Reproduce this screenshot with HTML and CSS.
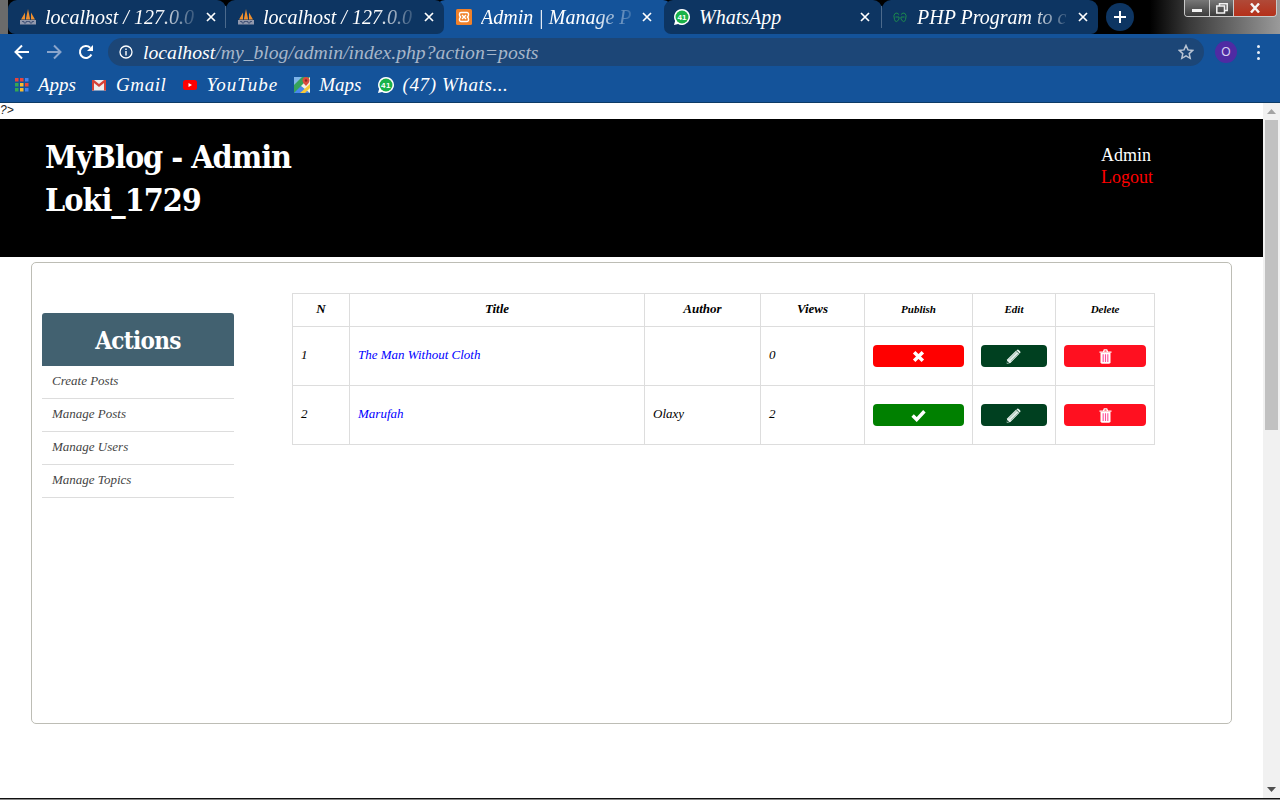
FILE: index.html
```html
<!DOCTYPE html>
<html lang="en">
<head>
<meta charset="utf-8">
<title>Admin | Manage Posts</title>
<link rel="stylesheet" href="styles.css">
</head>
<body>
<svg class="defs" width="0" height="0" aria-hidden="true">
  <defs>
    <symbol id="pma" viewBox="0 0 16 16">
      <path d="M1 10.500 5 3.500v7zM5.800 10.500 8 0l2.200 10.500zM11 3.500l4 7h-4z" fill="#ee8f2e"/>
      <path d="M0 11h16v4.500H0z" fill="#9299ad"/>
      <path d="M2 12.500h2v1.500h2v-1.500h4v1.500h2v-1.500h2" stroke="#33466e" stroke-width=".8" fill="none"/>
    </symbol>
    <symbol id="wa" viewBox="0 0 16 16">
      <path d="M8 0a8 8 0 1 1-3.900 15L0 16l1.100-4A8 8 0 0 1 8 0z" fill="#fff"/>
      <circle cx="8" cy="8" r="6.500" fill="#1ab248"/>
      <text x="8" y="11" class="wa-count">41</text>
    </symbol>
    <symbol id="x" viewBox="0 0 10 10">
      <path d="M1 1l8 8M9 1l-8 8" stroke="#fff" stroke-width="1.700" fill="none"/>
    </symbol>
    <symbol id="pencil" viewBox="0 0 16 16">
      <path d="M1.200 11.300 10.600 1.900l3.500 3.500-9.400 9.400-3.900.8z" fill="#e6f1ec"/>
      <path d="M11.600 1q1-1 2 0l1.400 1.400q1 1 0 2l-.5.500-3.500-3.500z" fill="#e6f1ec"/>
      <path d="M3.200 11.200 11.200 3.200M5 13 13 5" stroke="#7fa493" stroke-width=".8"/>
      <path d="M.8 15.200l.5-2.600 2.100 2.100z" fill="#23543d"/>
    </symbol>
    <symbol id="trash" viewBox="0 0 14 16">
      <path d="M.5 2.600h13V4H.5zM4.200 2.600l1-2.400h3.600l1 2.400H8.300l-.5-1.100H6.200l-.5 1.100z" fill="#fff"/>
      <path d="M1.600 4h10.800v10.200q0 1.600-1.600 1.600H3.200q-1.600 0-1.600-1.600z" fill="#fff"/>
      <path d="M4.500 5.500v8.500M7 5.500v8.500M9.500 5.500v8.500" stroke="#ff4f9a" stroke-width="1.200"/>
    </symbol>
  </defs>
</svg>

<div class="chrome">
  <div class="tabstrip">
    <div class="tab tab-first">
      <svg class="favicon"><use href="#pma"/></svg>
      <span class="tab-title">localhost / 127.0.0</span>
      <svg class="tab-close"><use href="#x"/></svg>
    </div>
    <div class="tab tab-before">
      <svg class="favicon"><use href="#pma"/></svg>
      <span class="tab-title">localhost / 127.0.0</span>
      <svg class="tab-close"><use href="#x"/></svg>
    </div>
    <div class="tab tab-active">
      <svg class="favicon" viewBox="0 0 16 16">
        <rect width="16" height="16" rx="1.500" fill="#f0812a"/>
        <path d="M5 3.500h6a1.500 1.500 0 0 1 1.500 1.500v1a2 2 0 0 1-1.500 2 2 2 0 0 1 1.500 2v1a1.500 1.500 0 0 1-1.500 1.500H5A1.500 1.500 0 0 1 3.500 11v-1A2 2 0 0 1 5 8 2 2 0 0 1 3.500 6V5A1.500 1.500 0 0 1 5 3.500zM6 6l4 4M10 6l-4 4" fill="none" stroke="#fff" stroke-width="1.400"/>
      </svg>
      <span class="tab-title">Admin | Manage P</span>
      <svg class="tab-close"><use href="#x"/></svg>
    </div>
    <div class="tab tab-after">
      <svg class="favicon"><use href="#wa"/></svg>
      <span class="tab-title tab-title-full">WhatsApp</span>
      <svg class="tab-close"><use href="#x"/></svg>
    </div>
    <div class="tab tab-last">
      <svg class="favicon" viewBox="0 0 16 16">
        <path d="M7 5.500Q5 3 3 4.500T2.500 10.500 7 10V8H3.500M9 5.500Q11 3 13 4.500T13.500 10.500 9 10V8h3.500" fill="none" stroke="#1c8a4e" stroke-width="1"/>
      </svg>
      <span class="tab-title">PHP Program to c</span>
      <svg class="tab-close"><use href="#x"/></svg>
    </div>
    <div class="newtab">
      <svg width="14" height="14" viewBox="0 0 14 14"><path d="M7 1v12M1 7h12" stroke="#fff" stroke-width="2"/></svg>
    </div>
    <div class="winctl">
      <span class="win-btn win-min"><i class="min-bar"></i></span>
      <span class="win-btn win-max"><svg width="12" height="11" viewBox="0 0 12 11"><path d="M3.500 2.500V.8h7.700v6.700H9M.8 3h7.700v7H.8z" fill="none" stroke="#f2f2f2" stroke-width="1.500"/></svg></span>
      <span class="win-btn win-close"><svg width="12" height="10" viewBox="0 0 12 10"><path d="M2 .5l8 9M10 .5l-8 9" stroke="#f5f5f5" stroke-width="2.400"/></svg></span>
    </div>
  </div>

  <div class="toolbar">
    <svg class="nav-icon" viewBox="0 0 16 16"><path d="M15 8H2M8 1.500 1.500 8 8 14.500" fill="none" stroke="#fff" stroke-width="2"/></svg>
    <svg class="nav-icon nav-fwd" viewBox="0 0 16 16"><path d="M1 8h13M8 1.500 14.500 8 8 14.500" fill="none" stroke="#8ba5cb" stroke-width="2"/></svg>
    <svg class="nav-icon nav-reload" viewBox="0 0 16 16"><path d="M13.400 10.500A6 6 0 1 1 12.200 3.700" fill="none" stroke="#fff" stroke-width="2"/><path d="M15 1v6H9z" fill="#fff"/></svg>
    <div class="omnibox">
      <svg class="info" viewBox="0 0 14 14"><circle cx="7" cy="7" r="6" fill="none" stroke="#fff" stroke-width="1.300"/><path d="M7 6v4.500M7 3.500v1.400" stroke="#fff" stroke-width="1.400"/></svg>
      <span class="url"><b class="host">localhost</b>/my_blog/admin/index.php?action=posts</span>
      <svg class="star" viewBox="0 0 16 16"><path d="M8 1.500l2 4.400 4.800.5-3.600 3.200 1 4.700L8 11.900l-4.200 2.400 1-4.700L1.200 6.400 6 5.900z" fill="none" stroke="#b9c4d3" stroke-width="1.500"/></svg>
    </div>
    <span class="avatar">O</span>
    <span class="menu-dots"><i></i><i></i><i></i></span>
  </div>

  <div class="bookmarks">
    <span class="bm bm-tight">
      <svg class="bm-icon bm-apps" viewBox="0 0 14 14">
        <path d="M0 0h3.500v3.500H0z" fill="#e8453c"/><path d="M5 0h3.500v3.500H5z" fill="#e8453c"/><path d="M10 0h3.500v3.500H10z" fill="#3e82f1"/>
        <path d="M0 5h3.500v3.500H0z" fill="#34a853"/><path d="M5 5h3.500v3.500H5z" fill="#f9bb2d"/><path d="M10 5h3.500v3.500H10z" fill="#e8453c"/>
        <path d="M0 10h3.500v3.500H0z" fill="#34a853"/><path d="M5 10h3.500v3.500H5z" fill="#f9bb2d"/><path d="M10 10h3.500v3.500H10z" fill="#3e82f1"/>
      </svg>Apps
    </span>
    <span class="bm">
      <svg class="bm-icon" viewBox="0 0 14 14"><rect y="2" width="14" height="10.500" fill="#eee"/><path d="M0 2h2l5 4 5-4h2v10.500h-2V5L7 9 2 5v7.500H0z" fill="#d64237"/></svg>Gmail
    </span>
    <span class="bm bm-wide">
      <svg class="bm-icon" viewBox="0 0 14 14"><rect y="2" width="14" height="10" rx="2.500" fill="#f00"/><path d="M5.500 5v4L9 7z" fill="#fff"/></svg>YouTube
    </span>
    <span class="bm bm-tight">
      <svg class="bm-icon bm-maps" viewBox="0 0 16 16"><rect width="16" height="16" fill="#36a35a"/><path d="M0 16 7 9l9 7z" fill="#4a87ee"/><path d="M0 0h8L0 8z" fill="#7fb4e8"/><path d="M7 9 16 0v16z" fill="#f4f1e6"/><path d="M6 16 16 7v4l-5 5z" fill="#f7c93a"/><path d="M12 0a3.500 3.500 0 0 1 3.500 3.500Q15.500 5.500 12 9 8.500 5.500 8.500 3.500A3.500 3.500 0 0 1 12 0z" fill="#dd4b3e"/><circle cx="12" cy="3.500" r="1.200" fill="#8f2a22"/></svg>Maps
    </span>
    <span class="bm">
      <svg class="bm-icon bm-wa"><use href="#wa"/></svg>(47) Whats...
    </span>
  </div>
</div>

<div class="viewport">
  <main class="page">
    <div class="leak">?&gt;</div>
    <header class="site-head">
      <h1 class="brand">MyBlog - Admin<br>Loki_1729</h1>
      <nav class="head-nav">
        <a class="nav-admin">Admin</a>
        <a class="nav-logout">Logout</a>
      </nav>
    </header>
    <section class="card">
      <aside class="side">
        <h2 class="side-title">Actions</h2>
        <a class="side-link">Create Posts</a>
        <a class="side-link">Manage Posts</a>
        <a class="side-link">Manage Users</a>
        <a class="side-link">Manage Topics</a>
      </aside>
      <table class="posts">
        <colgroup>
          <col class="c-n"><col class="c-title"><col class="c-author"><col class="c-views"><col class="c-pub"><col class="c-edit"><col class="c-del">
        </colgroup>
        <thead>
          <tr>
            <th>N</th><th>Title</th><th>Author</th><th>Views</th>
            <th class="th-small">Publish</th><th class="th-small">Edit</th><th class="th-small">Delete</th>
          </tr>
        </thead>
        <tbody>
          <tr>
            <td>1</td><td><a class="post-link">The Man Without Cloth</a></td><td></td><td>0</td>
            <td class="td-act"><span class="btn btn-red"><svg class="ic" viewBox="0 0 12 12"><path d="M2 2l8 8M10 2l-8 8" stroke="#fff" stroke-width="3.200"/></svg></span></td>
            <td class="td-act"><span class="btn btn-dark"><svg class="ic ic-pen"><use href="#pencil"/></svg></span></td>
            <td class="td-act"><span class="btn btn-del"><svg class="ic ic-trash"><use href="#trash"/></svg></span></td>
          </tr>
          <tr>
            <td>2</td><td><a class="post-link">Marufah</a></td><td>Olaxy</td><td>2</td>
            <td class="td-act"><span class="btn btn-green"><svg class="ic ic-check" viewBox="0 0 14 12"><path d="M1.500 6l3.800 3.800L12.500 2" fill="none" stroke="#fff" stroke-width="3.200"/></svg></span></td>
            <td class="td-act"><span class="btn btn-dark"><svg class="ic ic-pen"><use href="#pencil"/></svg></span></td>
            <td class="td-act"><span class="btn btn-del"><svg class="ic ic-trash"><use href="#trash"/></svg></span></td>
          </tr>
        </tbody>
      </table>
    </section>
  </main>
  <div class="scrollbar">
    <svg class="sb-arrow" width="9" height="5" viewBox="0 0 9 5"><path d="M4.500 0 9 5H0z" fill="#a3a3a3"/></svg>
    <div class="sb-thumb"></div>
    <svg class="sb-arrow sb-down" width="9" height="5" viewBox="0 0 9 5"><path d="M4.500 5 9 0H0z" fill="#505050"/></svg>
  </div>
</div>
<div class="taskline"></div>
</body>
</html>
```
FILE: styles.css
```css
* { box-sizing: border-box; }
html, body { height: 100%; }
body {
  margin: 0;
  width: 1280px;
  height: 800px;
  overflow: hidden;
  display: flex;
  flex-direction: column;
  background: #fff;
  font-family: "Liberation Serif", serif;
  color: #000;
}
.defs { display: block; height: 0; }
.wa-count {
  fill: #fff;
  font: 700 8px "Liberation Sans", sans-serif;
  text-anchor: middle;
}

/* browser chrome */
.chrome {
  height: 103px;
  flex: none;
  display: flex;
  flex-direction: column;
  font-family: "Liberation Serif", serif;
  font-style: italic;
  color: #fff;
  border-bottom: 1px solid #0c3a66;
}
.tabstrip {
  height: 34px;
  flex: none;
  display: flex;
  align-items: stretch;
  padding-left: 8px;
  background: linear-gradient(90deg, #6b6b6b 0, #6b6b6b 8px, #000 8px, #000 1150px, #3a3a3a 1190px, #9a9a9a 1280px);
}
.tab {
  width: 218px;
  flex: none;
  position: relative;
  z-index: 1;
  display: flex;
  align-items: center;
  padding: 0 10px 0 12px;
  background: #0d3562;
  border-radius: 9px 9px 0 0;
}
.tab-first { border-radius: 9px 9px 0 7px; }
.tab-first::after, .tab-after::after {
  content: "";
  position: absolute;
  right: 0;
  top: 6px;
  bottom: 6px;
  width: 1px;
  background: #4c6a8c;
}
.tab-before { border-radius: 9px 9px 7px 0; }
.tab-active {
  width: 236px;
  margin: 0 -8px;
  padding: 0 20px 0 20px;
  z-index: 0;
  background: #14539a;
}
.tab-after { padding: 0 12px 0 10px; border-radius: 9px 9px 0 7px; }
.tab-last { width: 216px; padding: 0 10px 0 10px; border-radius: 9px 9px 7px 0; }
.favicon { width: 16px; height: 16px; flex: none; margin-right: 9px; }
.tab-title {
  flex: 1;
  min-width: 0;
  white-space: nowrap;
  font-size: 20px;
  -webkit-mask-image: linear-gradient(90deg, #000 72%, transparent 100%);
  mask-image: linear-gradient(90deg, #000 72%, transparent 100%);
}
.tab-title-full { -webkit-mask-image: none; mask-image: none; }
.tab-close { width: 10px; height: 10px; flex: none; margin-left: 4px; }
.newtab {
  width: 28px;
  height: 28px;
  flex: none;
  margin: 3px 0 0 8px;
  border-radius: 50%;
  background: #0d3562;
  display: flex;
  align-items: center;
  justify-content: center;
}
.winctl {
  margin-left: auto;
  margin-right: 3px;
  height: 17px;
  display: flex;
  border: 1px solid #c9c9c9;
  border-top: 0;
  border-radius: 0 0 4px 4px;
  overflow: hidden;
}
.win-btn {
  display: flex;
  align-items: center;
  justify-content: center;
  height: 100%;
  border-right: 1px solid #ccc;
}
.win-min { width: 25px; background: linear-gradient(#777, #3c3c3c); }
.win-max { width: 24px; background: linear-gradient(#777, #3c3c3c); }
.win-close { width: 42px; background: linear-gradient(#b04a38, #b5301a); border-right: 0; }
.min-bar { display: block; width: 10px; height: 3px; margin-top: 5px; background: #f2f2f2; }

.toolbar {
  height: 33px;
  flex: none;
  display: flex;
  align-items: center;
  padding: 3px 0 0 14px;
  background: #14539a;
}
.nav-icon { width: 16px; height: 16px; flex: none; margin-right: 16px; }
.nav-reload { margin-right: 14px; }
.omnibox {
  width: 1096px;
  height: 28px;
  flex: none;
  display: flex;
  align-items: center;
  padding: 0 10px 0 11px;
  border-radius: 14px;
  background: #1c4677;
}
.info { width: 14px; height: 14px; flex: none; margin-right: 10px; }
.url { flex: 1; font-size: 19.700px; white-space: nowrap; color: #a7b6ca; }
.host { font-weight: 400; color: #fff; }
.star { width: 16px; height: 16px; flex: none; }
.avatar {
  width: 22px;
  height: 22px;
  flex: none;
  margin-left: 11px;
  border-radius: 50%;
  background: #4f2ba3;
  color: #d8d0f2;
  font: 400 12px/22px "Liberation Sans", sans-serif;
  text-align: center;
}
.menu-dots {
  width: 3px;
  margin-left: 20px;
  display: flex;
  flex-direction: column;
  gap: 3px;
}
.menu-dots i { display: block; width: 3px; height: 3px; background: #e8eef6; border-radius: 50%; }

.bookmarks {
  flex: 1;
  display: flex;
  align-items: center;
  padding-left: 15px;
  gap: 16px;
  background: #14539a;
  font-size: 19px;
  letter-spacing: .6px;
}
.bm { display: flex; align-items: center; white-space: nowrap; }
.bm-tight { letter-spacing: 0; }
.bm-wide { letter-spacing: 1px; }
.bm-icon { width: 14px; height: 14px; flex: none; margin-right: 10px; }
.bm-apps { margin-right: 9px; }
.bm-maps { width: 16px; height: 16px; margin-right: 9px; }
.bm-wa { width: 16px; height: 16px; margin-right: 9px; }

/* page */
.viewport { flex: 1; min-height: 0; display: flex; }
.page { flex: 1; min-width: 0; overflow: hidden; }
.leak {
  height: 16px;
  font: italic 12px/14px "Liberation Sans", sans-serif;
  color: #222;
}
.site-head {
  height: 138px;
  display: flex;
  justify-content: space-between;
  padding: 17px 110px 0 45px;
  background: #000;
  color: #fff;
}
.brand {
  margin: 0;
  font-family: "DejaVu Serif Condensed", "DejaVu Serif", serif;
  font-size: 32px;
  font-weight: 700;
  letter-spacing: -1px;
  line-height: 43px;
}
.head-nav {
  display: flex;
  flex-direction: column;
  padding-top: 8px;
  font-size: 18px;
  line-height: 22px;
}
.nav-admin { color: #fff; }
.nav-logout { color: #f00; }

.card {
  width: 1201px;
  height: 462px;
  margin: 5px 0 0 31px;
  padding: 30px 0 0 10px;
  display: flex;
  align-items: flex-start;
  gap: 58px;
  border: 1px solid #bdbdb5;
  border-radius: 5px;
}
.side { width: 192px; flex: none; margin-top: 20px; display: flex; flex-direction: column; }
.side-title {
  height: 53px;
  margin: 0;
  background: #426170;
  border-radius: 3px 3px 0 0;
  color: #fff;
  font-family: "DejaVu Serif Condensed", "DejaVu Serif", serif;
  font-size: 24px;
  font-weight: 700;
  letter-spacing: -.7px;
  line-height: 55px;
  text-align: center;
}
.side-link {
  height: 33px;
  padding-left: 10px;
  border-bottom: 1px solid #ddd;
  color: #444;
  font-size: 13px;
  font-style: italic;
  line-height: 30px;
}

.posts {
  width: 862px;
  flex: none;
  table-layout: fixed;
  border-collapse: collapse;
  font-size: 13px;
  font-style: italic;
}
.c-n { width: 57px; }
.c-title { width: 295px; }
.c-author { width: 116px; }
.c-views { width: 104px; }
.c-pub { width: 108px; }
.c-edit { width: 83px; }
.c-del { width: 99px; }
.posts th, .posts td { border: 1px solid #ddd; padding: 0 8px 2px; }
.posts th { height: 33px; font-weight: 700; text-align: center; }
.posts td { height: 59px; text-align: left; }
.posts .td-act { padding-bottom: 0; }
.posts .th-small { font-size: 11px; }
.post-link { color: #00f; }
.btn {
  display: flex;
  align-items: center;
  justify-content: center;
  height: 22px;
  border-radius: 4px;
}
.btn-red { background: #f00; }
.btn-green { background: #008000; }
.btn-dark { background: #004020; }
.btn-del { background: #ff1020; }
.ic { width: 13px; height: 13px; display: block; }
.ic-pen { width: 15px; height: 15px; margin-right: 2px; }
.ic-trash { width: 13px; height: 15px; }
.ic-check { width: 15px; height: 13px; }

.scrollbar {
  width: 17px;
  flex: none;
  display: flex;
  flex-direction: column;
  align-items: center;
  background: #f1f1f1;
}
.sb-arrow { margin-top: 6px; flex: none; }
.sb-thumb { width: 13px; height: 310px; margin-top: 6px; background: #c1c1c1; }
.sb-down { margin-top: auto; margin-bottom: 6px; }
.taskline {
  height: 2px;
  flex: none;
  border-top: 1px solid #111;
  background: #8a8a8a;
}
```
